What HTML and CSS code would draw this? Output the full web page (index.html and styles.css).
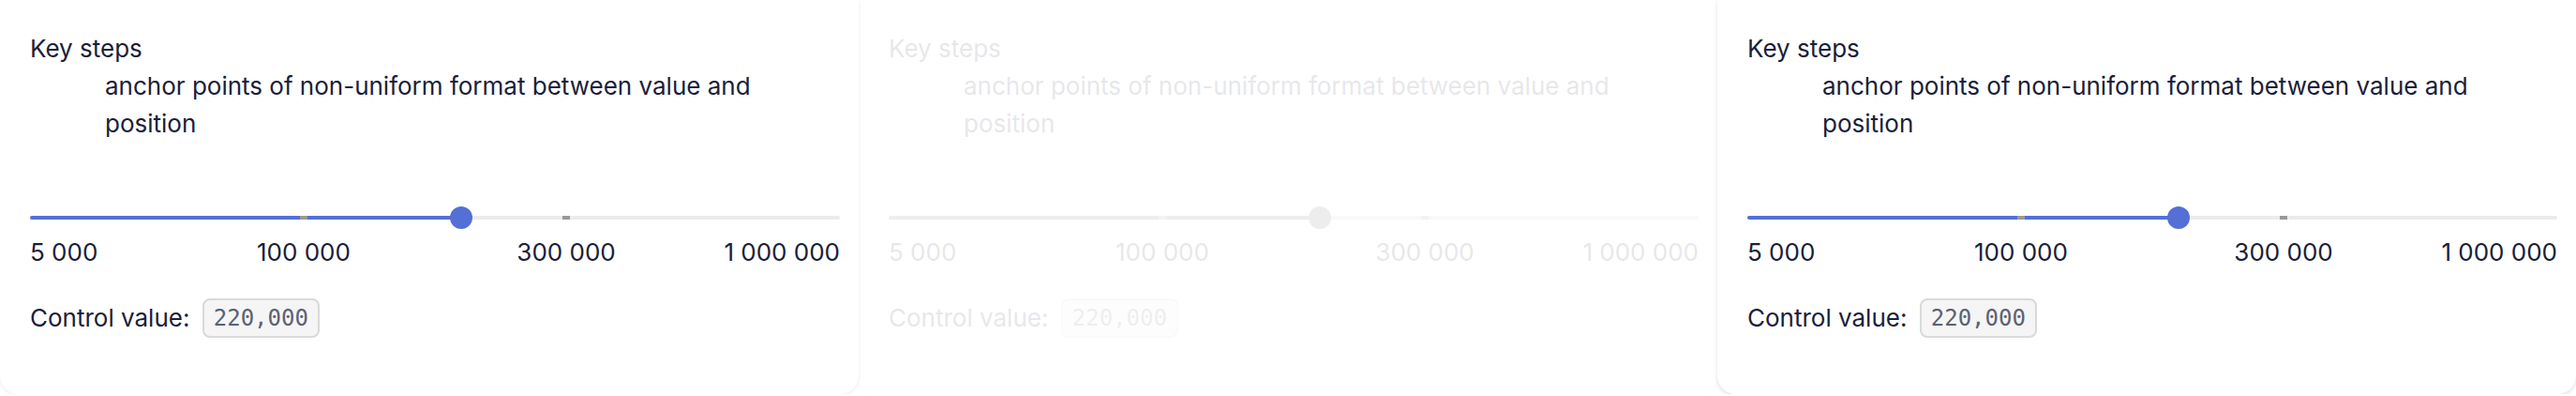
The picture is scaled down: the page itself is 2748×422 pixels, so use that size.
FILE: index.html
```
<!DOCTYPE html>
<html lang="en">
<head>
<meta charset="utf-8">
<title>Key steps</title>
<link rel="stylesheet" href="styles.css">
</head>
<body>
<div class="cards">
  <section class="card">
    <dl class="meta">
      <dt>Key steps</dt>
      <dd>anchor points of non-uniform format between value and position</dd>
    </dl>
    <div class="slider">
      <div class="rail"></div>
      <div class="fill" style="--pos: 0.5333"></div>
      <span class="tick" style="--pos: 0.3333"></span>
      <span class="tick" style="--pos: 0.6667"></span>
      <span class="thumb" style="--pos: 0.5333"></span>
    </div>
    <div class="marks">
      <span class="mark first">5 000</span>
      <span class="mark mid" style="--pos: 0.3333">100 000</span>
      <span class="mark mid" style="--pos: 0.6667">300 000</span>
      <span class="mark last">1 000 000</span>
    </div>
    <p class="control">Control value: <code class="value">220,000</code></p>
  </section>
  <section class="card disabled">
    <dl class="meta">
      <dt>Key steps</dt>
      <dd>anchor points of non-uniform format between value and position</dd>
    </dl>
    <div class="slider">
      <div class="rail"></div>
      <div class="fill" style="--pos: 0.5333"></div>
      <span class="tick" style="--pos: 0.3333"></span>
      <span class="tick" style="--pos: 0.6667"></span>
      <span class="thumb" style="--pos: 0.5333"></span>
    </div>
    <div class="marks">
      <span class="mark first">5 000</span>
      <span class="mark mid" style="--pos: 0.3333">100 000</span>
      <span class="mark mid" style="--pos: 0.6667">300 000</span>
      <span class="mark last">1 000 000</span>
    </div>
    <p class="control">Control value: <code class="value">220,000</code></p>
  </section>
  <section class="card raised">
    <dl class="meta">
      <dt>Key steps</dt>
      <dd>anchor points of non-uniform format between value and position</dd>
    </dl>
    <div class="slider">
      <div class="rail"></div>
      <div class="fill" style="--pos: 0.5333"></div>
      <span class="tick" style="--pos: 0.3333"></span>
      <span class="tick" style="--pos: 0.6667"></span>
      <span class="thumb" style="--pos: 0.5333"></span>
    </div>
    <div class="marks">
      <span class="mark first">5 000</span>
      <span class="mark mid" style="--pos: 0.3333">100 000</span>
      <span class="mark mid" style="--pos: 0.6667">300 000</span>
      <span class="mark last">1 000 000</span>
    </div>
    <p class="control">Control value: <code class="value">220,000</code></p>
  </section>
</div>
</body>
</html>
```
FILE: styles.css
```
html, body {
  margin: 0;
  padding: 0;
  background: #ffffff;
}

body {
  font-family: Inter, "Noto Sans", sans-serif;
  font-size: 26px;
  line-height: 40px;
  color: #1b1e3a;
  overflow: hidden;
}

.cards {
  display: flex;
  width: 2748px;
}

.card {
  box-sizing: border-box;
  width: 916px;
  height: 420px;
  flex: none;
  padding: 32px 20px 0 32px;
  background: #ffffff;
  border-radius: 0 0 20px 20px;
  box-shadow: 0 1px 4px rgba(0, 0, 0, 0.08);
}

.card.disabled {
  opacity: 0.1;
}

.card.raised {
  box-shadow: 0 2px 5px rgba(0, 0, 0, 0.12);
}

.meta {
  margin: 0;
}

.meta dt {
  margin: 0;
}

.meta dd {
  margin: 0 0 0 80px;
}

.slider {
  --inset: 12px;
  position: relative;
  height: 24px;
  margin-top: 68px;
  display: flex;
  align-items: center;
}

.rail {
  flex: 1;
  height: 4px;
  border-radius: 2px;
  background: #ebebeb;
}

.fill {
  position: absolute;
  left: 0;
  top: 10px;
  height: 4px;
  border-radius: 2px;
  width: calc(var(--inset) + (100% - 2 * var(--inset)) * var(--pos));
  background: #5470d6;
}

.tick {
  position: absolute;
  top: 10px;
  width: 8px;
  height: 4px;
  margin-left: -4px;
  left: calc(var(--inset) + (100% - 2 * var(--inset)) * var(--pos));
  background: #999999;
}

.thumb {
  position: absolute;
  top: 0;
  width: 24px;
  height: 24px;
  margin-left: -12px;
  border-radius: 50%;
  left: calc(var(--inset) + (100% - 2 * var(--inset)) * var(--pos));
  background: #5470d6;
}

.disabled .fill,
.disabled .thumb {
  background: #5c5c5c;
}

.disabled .rail {
  background: #c8c8c8;
}

.disabled .tick {
  background: #8a8a8a;
}

.marks {
  --inset: 12px;
  position: relative;
  height: 40px;
  margin-top: 5px;
}

.mark {
  position: absolute;
  top: 0;
  white-space: nowrap;
}

.mark.first {
  left: 0;
}

.mark.last {
  right: 0;
}

.mark.mid {
  left: calc(var(--inset) + (100% - 2 * var(--inset)) * var(--pos));
  transform: translateX(-50%);
}

.control {
  margin: 29px 0 0;
  display: flex;
  align-items: center;
  height: 42px;
  white-space: pre;
}

.value {
  box-sizing: border-box;
  height: 42px;
  margin-left: 6px;
  padding: 4px 10px;
  border: 2px solid #d9d9d9;
  border-radius: 8px;
  background: #f5f5f5;
  font-family: "DejaVu Sans Mono", "Liberation Mono", monospace;
  font-size: 24px;
  line-height: 30px;
  color: #5d6174;
}
```
